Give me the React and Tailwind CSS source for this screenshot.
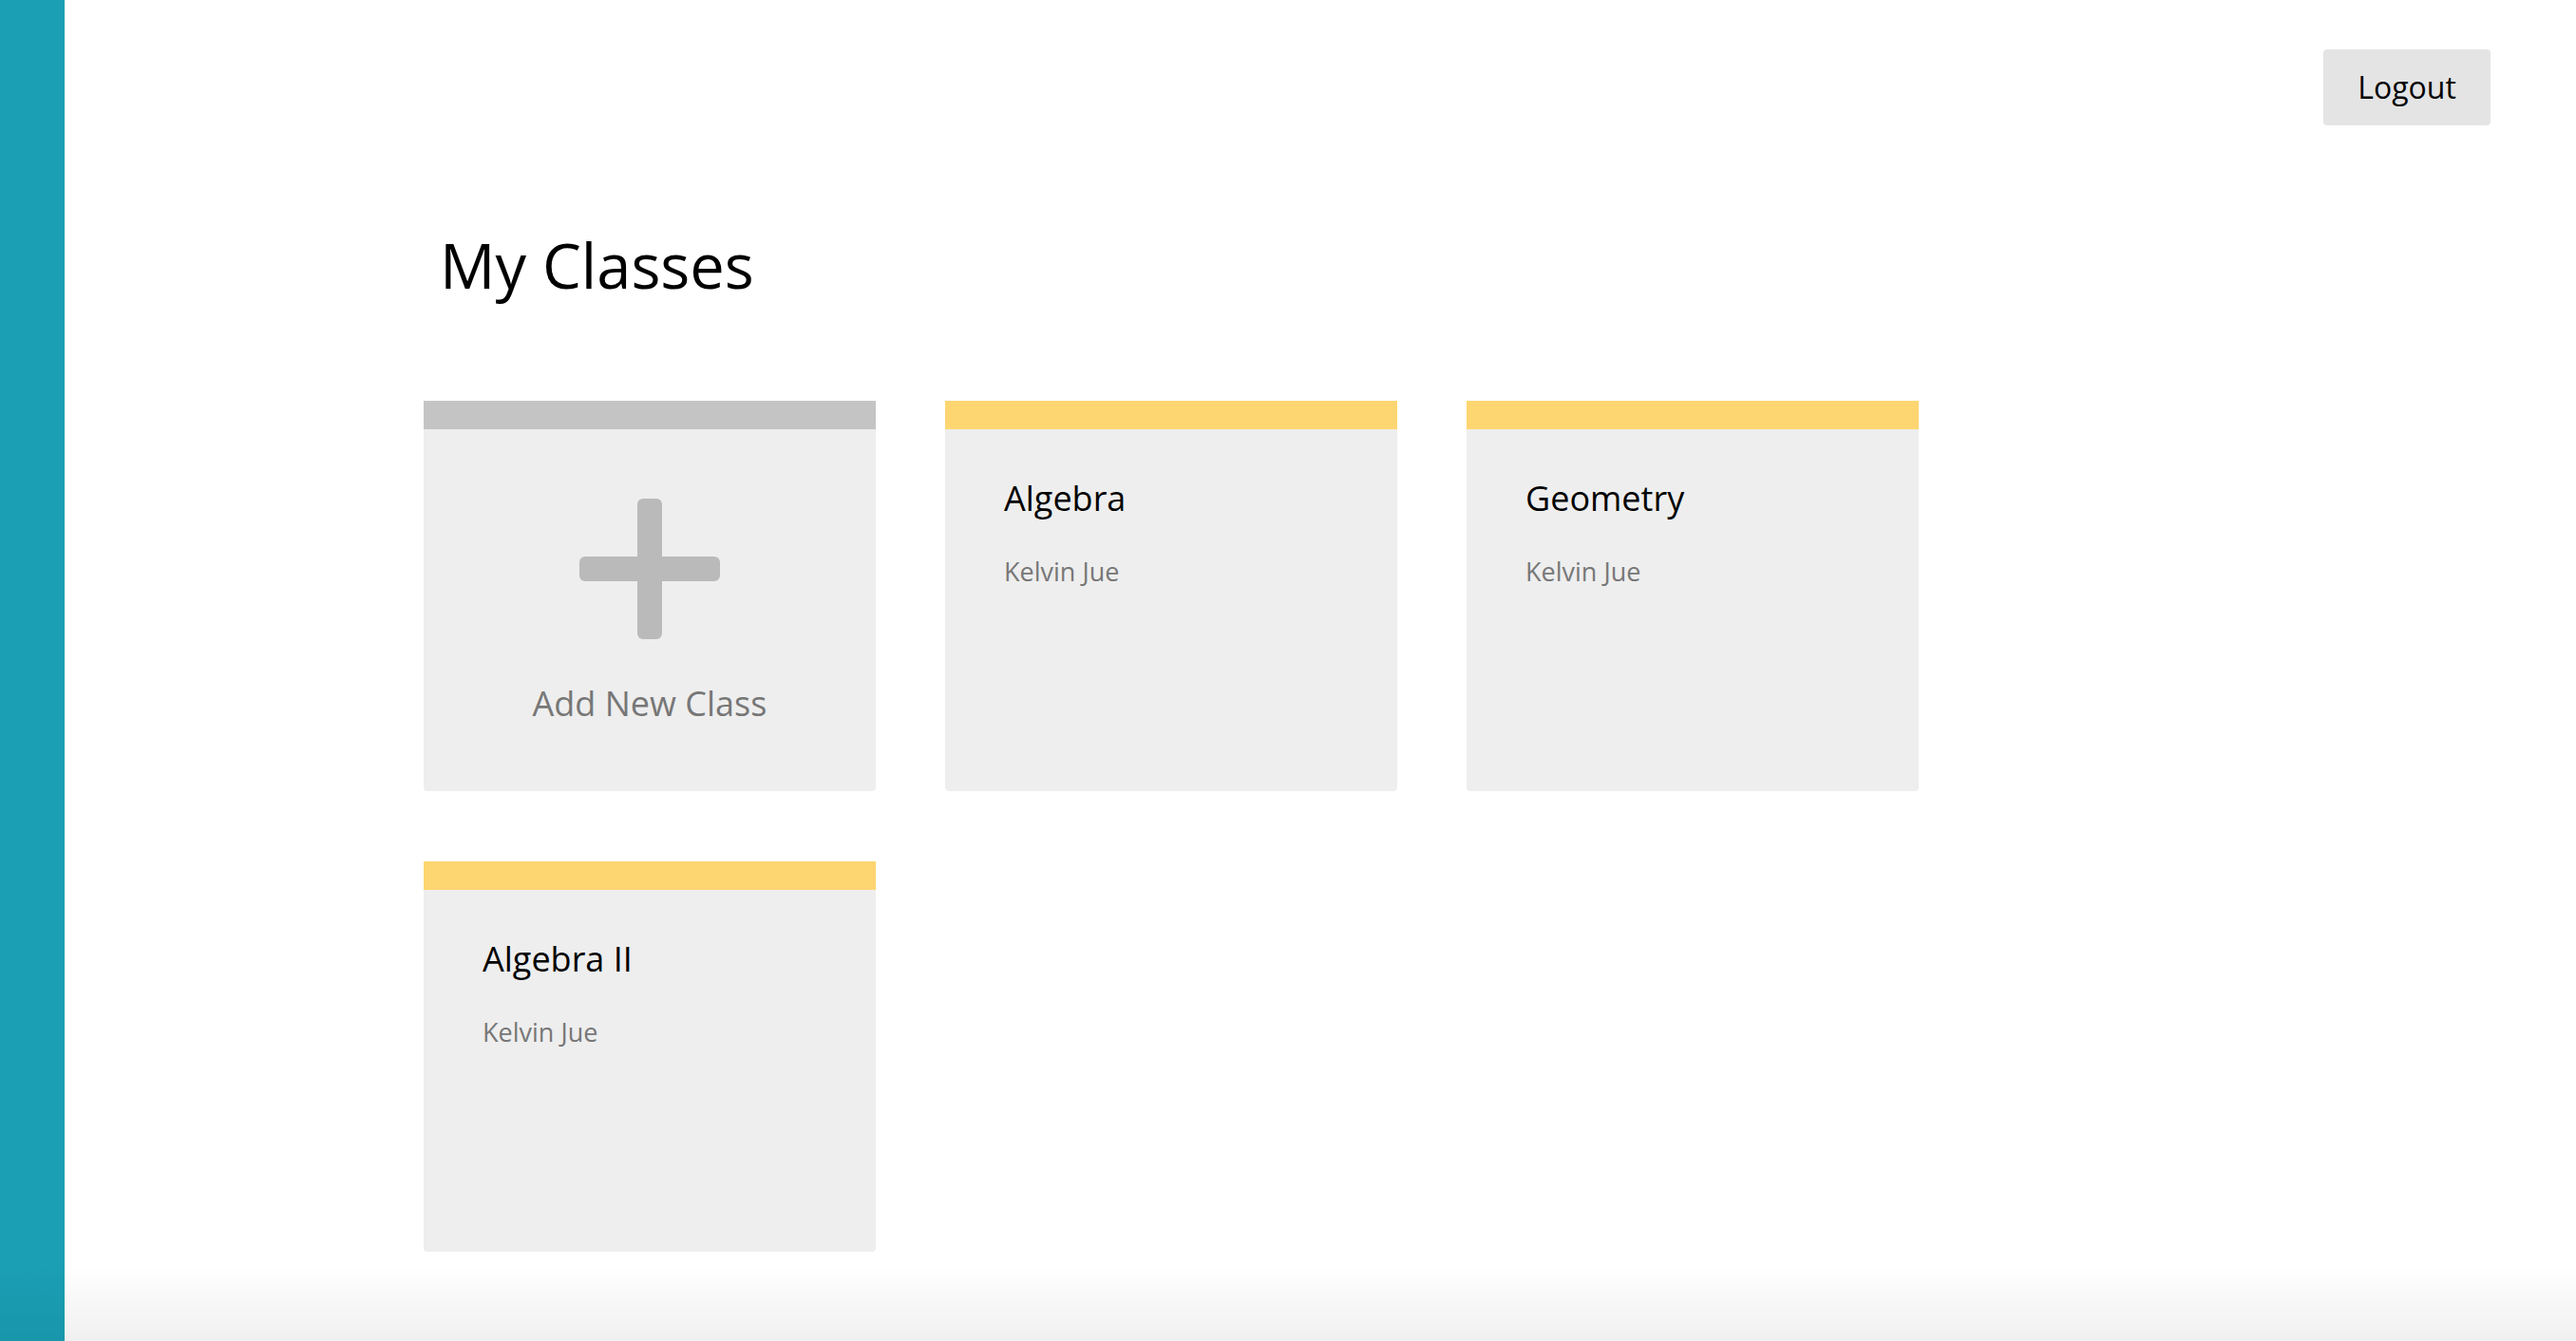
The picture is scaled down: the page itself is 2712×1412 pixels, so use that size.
const classes = [
  { id: 1, name: 'Algebra', teacher: 'Kelvin Jue' },
  { id: 2, name: 'Geometry', teacher: 'Kelvin Jue' },
  { id: 3, name: 'Algebra II', teacher: 'Kelvin Jue' },
]

function PlusIcon() {
  return (
    <svg width="148" height="148" viewBox="0 0 148 148">
      <rect x="61" y="0" width="26" height="148" rx="6" fill="#bababa" />
      <rect x="0" y="61" width="148" height="26" rx="6" fill="#bababa" />
    </svg>
  )
}

function AddClassCard() {
  return (
    <div className="w-[476px] h-[411px] flex flex-col bg-[#eeeeee] rounded-b-[4px] overflow-hidden cursor-pointer">
      <div className="h-[30px] bg-[#c4c4c4]" />
      <div className="flex-1 flex flex-col items-center justify-center pt-[7px]">
        <PlusIcon />
        <p className="mt-[41px] text-[36px] leading-[54px] text-[#777777]">Add New Class</p>
      </div>
    </div>
  )
}

function ClassCard({ name, teacher }) {
  return (
    <div className="w-[476px] h-[411px] flex flex-col bg-[#eeeeee] rounded-b-[4px] overflow-hidden cursor-pointer">
      <div className="h-[30px] bg-[#fdd571]" />
      <div className="pt-[55px] px-[62px]">
        <h3 className="text-[36px] leading-none text-black">{name}</h3>
        <p className="mt-[45px] text-[27px] leading-none text-[#777777]">{teacher}</p>
      </div>
    </div>
  )
}

export default function App() {
  return (
    <div className="relative flex h-screen w-full overflow-hidden bg-white" style={{ fontFamily: '"Open Sans", sans-serif' }}>
      {/* Sidebar */}
      <aside className="w-[68px] h-full flex-shrink-0 bg-[#1a9fb5]" />

      <main className="flex-1 flex flex-col">
        {/* Header */}
        <div className="flex justify-end pt-[52px] pr-[90px]">
          <button className="w-[176px] h-[80px] rounded-[4px] bg-[#e4e4e4] text-[32px] text-black">
            Logout
          </button>
        </div>

        <div className="pl-[378px]">
          <h1 className="mt-[115px] pl-[17px] text-[65px] leading-none text-black">My Classes</h1>

          <div className="mt-[110px] grid grid-cols-[repeat(3,476px)] gap-x-[73px] gap-y-[74px]">
            <AddClassCard />
            {classes.map(c => (
              <ClassCard key={c.id} name={c.name} teacher={c.teacher} />
            ))}
          </div>
        </div>
      </main>

      {/* bottom fade */}
      <div className="pointer-events-none absolute bottom-0 left-0 right-0 h-[80px] bg-gradient-to-b from-transparent to-black/[0.06]" />
    </div>
  )
}
